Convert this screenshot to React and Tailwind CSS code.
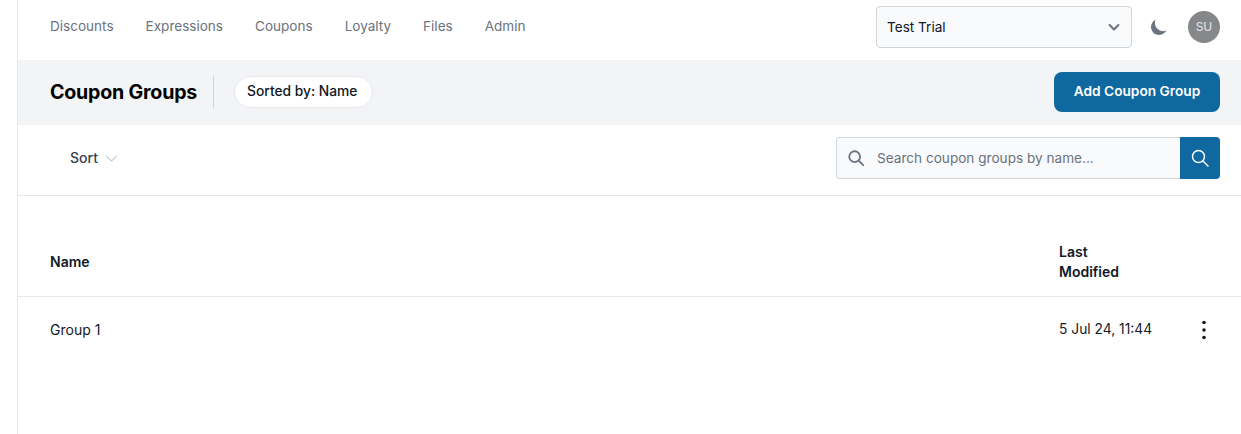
import React from "react";

function SearchIcon({ className, sw = 2 }) {
  return (
    <svg viewBox="0 0 20 20" fill="none" stroke="currentColor" strokeWidth={sw} strokeLinecap="round" className={className}>
      <circle cx="8.5" cy="8.5" r="6" />
      <path d="M13 13l5 5" />
    </svg>
  );
}

export default function App() {
  const nav = ["Discounts", "Expressions", "Coupons", "Loyalty", "Files", "Admin"];
  return (
    <div className="h-[434px] w-[1241px] overflow-hidden bg-white font-['Inter',sans-serif] text-[#111827]">
      <div className="ml-[17px] h-full border-l border-[#e5e7eb]">
        <div className="flex h-[60px] items-center pl-8 pr-[21px]">
          <nav className="flex gap-8 pb-[8px]">
            {nav.map((n) => (
              <span key={n} className="text-[13.55px] text-[#6b7280]">{n}</span>
            ))}
          </nav>
          <div className="ml-auto flex items-center pb-[6px]">
            <div className="flex h-[42px] w-[256px] items-center justify-between rounded border border-[#d1d5db] bg-[#f9fafb] pl-[10px] pr-[9px] text-[13.6px]">
              <span>Test Trial</span>
              <svg viewBox="0 0 20 20" fill="none" stroke="#6b7280" strokeWidth="2.6" strokeLinecap="round" strokeLinejoin="round" className="h-[16px] w-[16px]">
                <path d="M4.5 7.5L10 13l5.5-5.5" />
              </svg>
            </div>
            <svg viewBox="0 0 20 20" fill="#6b7280" className="ml-[17px] h-[20px] w-[20px]">
              <path d="M17.3 13.3A8 8 0 016.7 2.7a8 8 0 1010.6 10.6z" />
            </svg>
            <div className="ml-[19px] flex h-8 w-8 items-center justify-center rounded-full bg-[#858789] text-xs text-[#e5e7eb]">SU</div>
          </div>
        </div>

        <div className="flex h-[65px] items-center bg-[#f3f4f6] pl-8 pr-[21px]">
          <h1 className="text-[19.6px] font-bold tracking-[-0.2px] text-black">Coupon Groups</h1>
          <div className="ml-4 mb-[1px] h-8 w-px bg-[#d1d5db]" />
          <span className="ml-5 mb-[2px] flex h-8 items-center rounded-full border border-[#e5e7eb] bg-white pl-3 pr-[15px] text-[13.8px] font-medium">Sorted by: Name</span>
          <button className="ml-auto mb-[2px] h-10 w-[166px] rounded-lg bg-[#0f68a0] text-[13.7px] font-semibold text-white">Add Coupon Group</button>
        </div>

        <div className="flex h-[71px] items-center border-b border-[#e5e7eb] pb-[4px] pl-[52px] pr-[21px]">
          <span className="mb-[2px] text-[14px] font-medium text-[#374151]">Sort</span>
          <svg viewBox="0 0 20 20" fill="none" stroke="#9ca3af" strokeWidth="1.4" strokeLinecap="round" strokeLinejoin="round" className="ml-[7px] h-[13px] w-[13px]">
            <path d="M2 6l8 8 8-8" />
          </svg>
          <div className="ml-auto flex h-[42px] w-[384px]">
            <div className="flex flex-1 items-center rounded-l border border-r-0 border-[#d1d5db] bg-[#f9fafb] pl-[10px]">
              <SearchIcon className="h-[18px] w-[18px] text-[#6b7280]" />
              <span className="ml-3 text-[13.6px] text-[#6b7280]">Search coupon groups by name...</span>
            </div>
            <div className="flex w-10 items-center justify-center rounded-r bg-[#0f68a0] text-white">
              <SearchIcon className="h-[20px] w-[20px]" sw={1.5} />
            </div>
          </div>
        </div>

        <div className="flex h-[101px] items-end border-b border-[#e5e7eb] pb-[14px] pl-8 pr-[21px] text-[14px] font-semibold leading-5">
          <span className="flex-1 pb-[10px]">Name</span>
          <span className="w-[161px]">Last<br />Modified</span>
        </div>

        <div className="flex h-[65px] items-center pl-8 pr-[21px] text-[13.8px]">
          <span className="mb-[1px] flex-1 text-[14px]">Group 1</span>
          <span className="w-[161px]">5 Jul 24, 11:44</span>
          <svg viewBox="0 0 4 20" fill="#111827" className="absolute left-[1202px] h-5 w-1">
            <circle cx="2" cy="2.5" r="1.8" />
            <circle cx="2" cy="10" r="1.8" />
            <circle cx="2" cy="17.5" r="1.8" />
          </svg>
        </div>
      </div>
    </div>
  );
}
